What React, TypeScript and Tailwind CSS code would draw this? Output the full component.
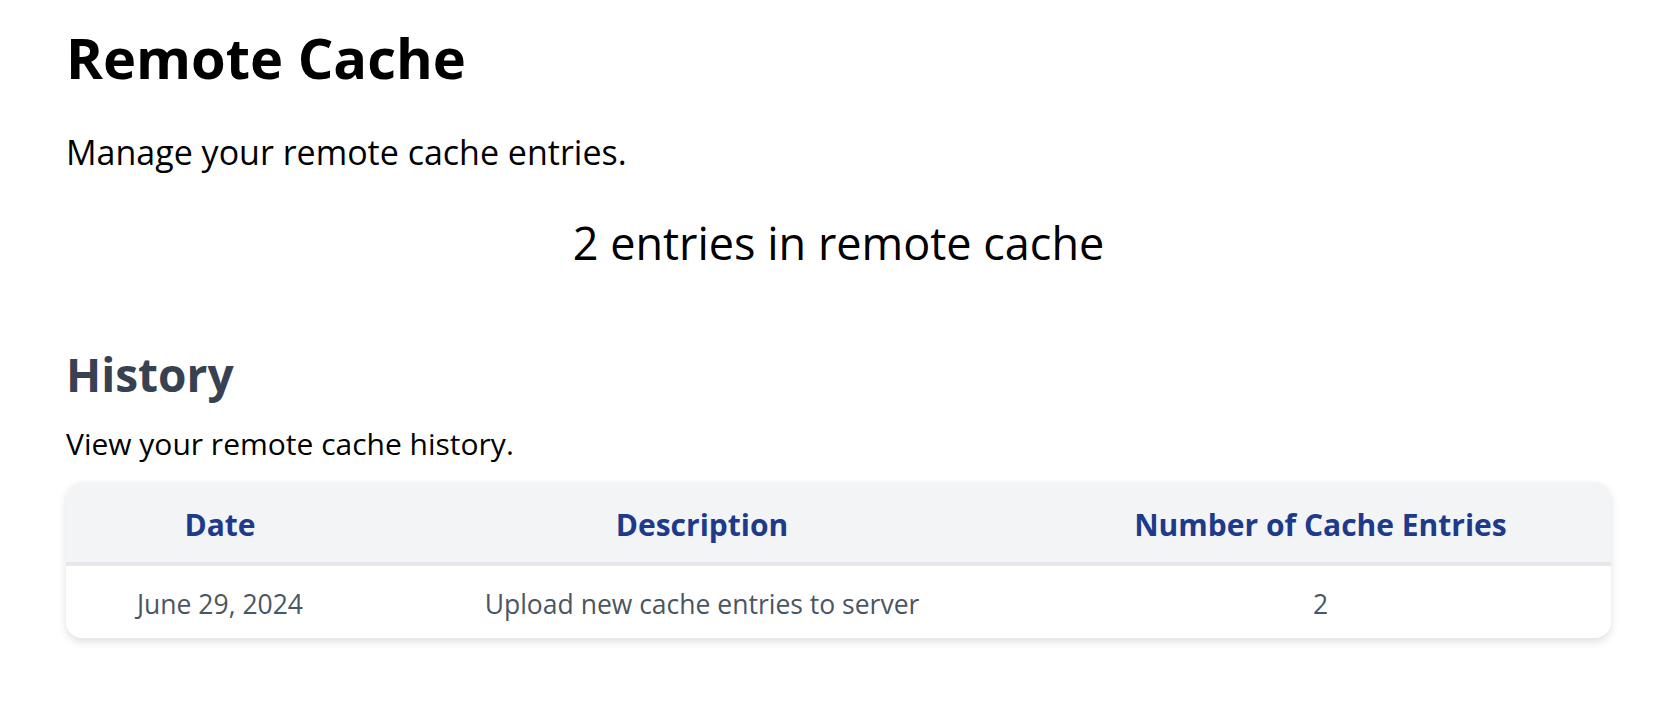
const rows = [
  { date: 'June 29, 2024', description: 'Upload new cache entries to server', count: 2 },
]

export default function App() {
  return (
    <div className="min-h-screen bg-white font-['Open_Sans',sans-serif] text-black">
      <div className="pl-[66px] pr-[45px] pt-[23px]">
        <h1 className="text-[56px] leading-[68px] font-bold">Remote Cache</h1>
        <p className="mt-[41px] text-[34px] leading-[40px]">Manage your remote cache entries.</p>

        <p className="mt-[47px] text-center text-[45px] leading-[48px]">2 entries in remote cache</p>

        <h2 className="mt-[79px] text-[46px] leading-[56px] font-bold text-[#374151]">History</h2>
        <p className="mt-[25px] text-[30px] leading-[34px]">View your remote cache history.</p>

        <div className="mt-[21px] overflow-hidden rounded-2xl bg-white shadow-[0_4px_8px_rgba(0,0,0,0.12)]">
          <div className="grid grid-cols-[308px_656px_1fr] border-b-4 border-[#e5e7eb] bg-[#f3f4f6] text-center text-[30px] leading-[40px] font-bold text-[#1e3a8a]">
            <div className="pt-[23px] pb-[17px]">Date</div>
            <div className="pt-[23px] pb-[17px]">Description</div>
            <div className="pt-[23px] pb-[17px]">Number of Cache Entries</div>
          </div>
          {rows.map((row, i) => (
            <div
              key={i}
              className="grid grid-cols-[308px_656px_1fr] text-center text-[26.5px] leading-[35px] text-[#4b5563]"
            >
              <div className="pt-[21px] pb-[16px]">{row.date}</div>
              <div className="pt-[21px] pb-[16px]">{row.description}</div>
              <div className="pt-[21px] pb-[16px]">{row.count}</div>
            </div>
          ))}
        </div>
      </div>
    </div>
  )
}
